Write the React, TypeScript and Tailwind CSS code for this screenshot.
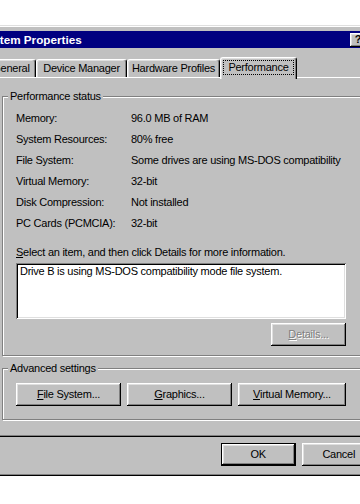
import React from "react";

const BTN =
  "h-[23px] flex items-center justify-center bg-[#c0c0c0] shadow-[inset_-1px_-1px_#000,inset_1px_1px_#fff,inset_-2px_-2px_#808080,inset_2px_2px_#dfdfdf]";

const TAB =
  "h-[18px] flex items-center justify-center border-l border-t border-white border-r border-r-black rounded-t-[3px] shadow-[inset_-1px_0_#808080,inset_1px_1px_#dfdfdf]";

const GROUP =
  "border border-[#808080] shadow-[inset_1px_1px_#fff,1px_1px_#fff] pl-[13px]";

const LEGEND = "-mt-[7px] -ml-[8px] w-fit bg-[#c0c0c0] px-[2px] h-[13px]";

function Btn({
  w,
  children,
  disabled,
}: {
  w: string;
  children: React.ReactNode;
  disabled?: boolean;
}) {
  return (
    <div
      className={
        BTN +
        " " +
        w +
        (disabled ? " text-[#808080] [text-shadow:1px_1px_0_#fff]" : "")
      }
    >
      {children}
    </div>
  );
}

function TitleBtn({ children }: { children: React.ReactNode }) {
  return (
    <div className="w-[16px] h-[14px] flex items-center justify-center bg-[#c0c0c0] text-black font-bold text-[11px] leading-[11px] tracking-normal shadow-[inset_-1px_-1px_#000,inset_1px_1px_#fff,inset_-2px_-2px_#808080,inset_2px_2px_#dfdfdf]">
      {children}
    </div>
  );
}

const rows: [string, string][] = [
  ["Memory:", "96.0 MB of RAM"],
  ["System Resources:", "80% free"],
  ["File System:", "Some drives are using MS-DOS compatibility"],
  ["Virtual Memory:", "32-bit"],
  ["Disk Compression:", "Not installed"],
  ["PC Cards (PCMCIA):", "32-bit"],
];

export default function App() {
  return (
    <div className="w-[360px] h-[504px] overflow-hidden bg-white font-['Liberation_Sans',Arial,sans-serif] text-[11px] leading-[13px] tracking-[-0.25px] text-black">
      <div className="mt-[25px] ml-[-30px] w-[420px] bg-[#c0c0c0] pt-[6px] px-[4px] pb-[10px] shadow-[inset_-1px_-1px_#000,inset_1px_1px_#dfdfdf,inset_-2px_-2px_#808080,inset_2px_2px_#fff]">
        {/* Title bar */}
        <div className="h-[17px] bg-[#000080] flex items-center pl-[5px] pr-[2px]">
          <span className="text-white font-bold text-[11.7px] leading-[14px] tracking-normal">
            System Properties
          </span>
          <div className="ml-auto flex gap-[2px]">
            <TitleBtn>?</TitleBtn>
            <TitleBtn>×</TitleBtn>
          </div>
        </div>

        <div className="mt-[9px] px-[10px]">
          {/* Tabs */}
          <div className="flex items-end h-[20px] pl-[2px]">
            <div className={TAB + " w-[50px]"}>General</div>
            <div className={TAB + " w-[91px]"}>Device Manager</div>
            <div className={TAB + " w-[93px]"}>Hardware Profiles</div>
            <div className="relative z-10 -mb-[2px] h-[22px] w-[77px] flex justify-center items-start pt-[2px] bg-[#c0c0c0] border-l border-t border-white border-r border-r-black rounded-t-[3px] shadow-[inset_-1px_0_#808080,inset_1px_1px_#dfdfdf]">
              <span className="h-[15px] border border-dotted border-black px-[4px] leading-[13px]">
                Performance
              </span>
            </div>
          </div>

          {/* Panel */}
          <div className="pt-[19px] pl-[18px] pr-[8px] pb-[17px] shadow-[inset_1px_1px_#fff,inset_-1px_-1px_#000,inset_-2px_-2px_#808080]">
            <div className={GROUP + " pb-[9px]"}>
              <div className={LEGEND}>Performance status</div>
              <div className="mt-[5px]">
                {rows.map(([k, v]) => (
                  <div key={k} className="flex h-[21px] items-center">
                    <div className="w-[115px]">{k}</div>
                    <div>{v}</div>
                  </div>
                ))}
              </div>
              <div className="mt-[12px] h-[13px]">
                <span className="underline">S</span>elect an item, and then
                click Details for more information.
              </div>
              <div className="mt-[4px] w-[330px] h-[56px] bg-white pl-[4px] pt-[2px] shadow-[inset_1px_1px_#808080,inset_-1px_-1px_#fff,inset_2px_2px_#000,inset_-2px_-2px_#dfdfdf]">
                Drive B is using MS-DOS compatibility mode file system.
              </div>
              <div className="mt-[4px] w-[330px] flex justify-end">
                <Btn w="w-[75px]" disabled>
                  <span>
                    <span className="underline">D</span>etails...
                  </span>
                </Btn>
              </div>
            </div>

            <div className={GROUP + " mt-[12px] pb-[13px]"}>
              <div className={LEGEND}>Advanced settings</div>
              <div className="mt-[8px] flex gap-[6px]">
                <Btn w="w-[105px]">
                  <span>
                    <span className="underline">F</span>ile System...
                  </span>
                </Btn>
                <Btn w="w-[105px]">
                  <span>
                    <span className="underline">G</span>raphics...
                  </span>
                </Btn>
                <Btn w="w-[108px]">
                  <span>
                    <span className="underline">V</span>irtual Memory...
                  </span>
                </Btn>
              </div>
            </div>
          </div>

          {/* Dialog buttons */}
          <div className="mt-[6px] ml-[237px] flex gap-[6px]">
            <div className={BTN + " w-[75px] border border-black"}>OK</div>
            <div className={BTN + " w-[75px]"}>Cancel</div>
          </div>
        </div>
      </div>
    </div>
  );
}
